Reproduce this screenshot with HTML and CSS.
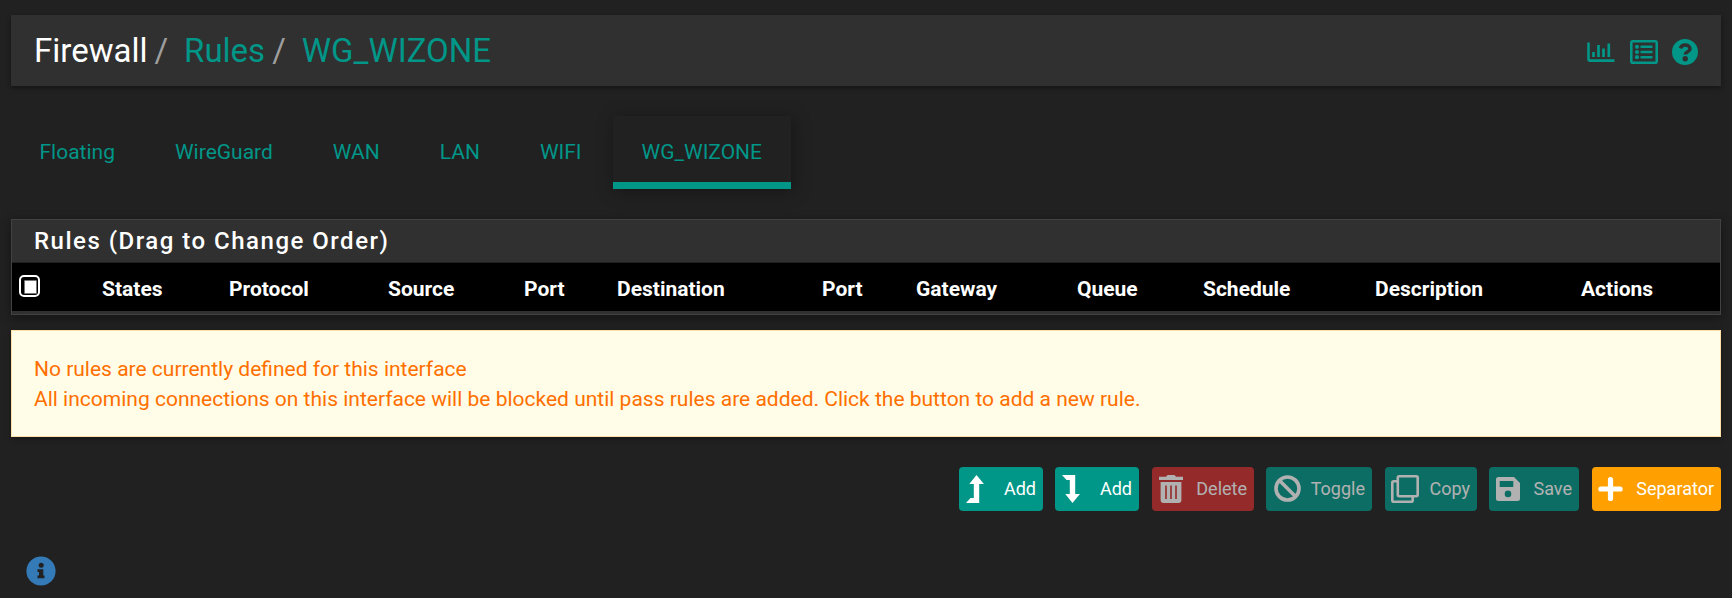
FILE: index.html
```
<!DOCTYPE html>
<html lang="en">
<head>
    <meta charset="UTF-8">
    <meta name="viewport" content="width=device-width, initial-scale=1.0">
    <title>Firewall: Rules: WG_WIZONE</title>
    <link rel="stylesheet" href="styles.css">
</head>
<body>
    <header class="header">
        <ol class="breadcrumb">
            <li>Firewall</li>
            <li><a href="#">Rules</a></li>
            <li><a href="#">WG_WIZONE</a></li>
        </ol>
        <div class="context-links">
            <a href="#" title="Related status">
                <svg width="28" height="20" viewBox="0 0 28 20"><path d="M1.5 0.5V17.5Q1.5 18.6 2.6 18.6H27.5" fill="none" stroke="currentColor" stroke-width="2.6"/><path d="M6.5 10V15M11.5 3V15M16.5 6.5V15M21.8 1.5V15" stroke="currentColor" stroke-width="2.7"/></svg>
            </a>
            <a href="#" title="Related log entries">
                <svg width="28" height="24" viewBox="0 0 28 24"><rect x="1.3" y="1.3" width="25.4" height="21.4" rx="1.5" fill="none" stroke="currentColor" stroke-width="2.6"/><path d="M10.5 6.8H22.5M10.5 12H22.5M10.5 17.2H22.5" stroke="currentColor" stroke-width="2.4"/><circle cx="7" cy="6.8" r="2.1"/><circle cx="7" cy="12" r="2.1"/><circle cx="7" cy="17.2" r="2.1"/></svg>
            </a>
            <a href="#" title="Help">
                <svg width="26" height="26" viewBox="0 0 26 26"><circle cx="13" cy="13" r="13"/><path d="M8.3 9.3C9.3 7 10.8 6 13.1 6C15.9 6 18 7.6 18 9.9C18 13 13.3 12.5 13.3 15.5" fill="none" stroke="#303030" stroke-width="3.6"/><circle cx="13.2" cy="19.7" r="2.7" fill="#303030"/></svg>
            </a>
        </div>
    </header>

    <ul class="nav-tabs">
        <li><a href="#">Floating</a></li>
        <li><a href="#">WireGuard</a></li>
        <li><a href="#">WAN</a></li>
        <li><a href="#">LAN</a></li>
        <li><a href="#">WIFI</a></li>
        <li class="active"><a href="#">WG_WIZONE</a></li>
    </ul>

    <div class="panel">
        <h2 class="panel-heading">Rules (Drag to Change Order)</h2>
        <table class="rules">
            <thead>
                <tr>
                    <th class="col-check"><span class="checkbox"></span></th>
                    <th class="col-states">States</th>
                    <th class="col-protocol">Protocol</th>
                    <th class="col-source">Source</th>
                    <th class="col-sport">Port</th>
                    <th class="col-dest">Destination</th>
                    <th class="col-dport">Port</th>
                    <th class="col-gateway">Gateway</th>
                    <th class="col-queue">Queue</th>
                    <th class="col-schedule">Schedule</th>
                    <th class="col-descr">Description</th>
                    <th>Actions</th>
                </tr>
            </thead>
        </table>
    </div>

    <div class="alert">
        No rules are currently defined for this interface<br>
        All incoming connections on this interface will be blocked until pass rules are added. Click the button to add a new rule.
    </div>

    <nav class="action-buttons">
        <button class="btn btn-success btn-add">
            <svg width="18" height="28" viewBox="0 0 18 28"><path d="M0 28L4.5 23H7.8V9H3.3L10.5 0L17.9 9H13.2V28Z"/></svg>
            Add
        </button>
        <button class="btn btn-success btn-add btn-gap">
            <svg width="18" height="28" viewBox="0 0 18 28"><path d="M0 0H13.2V19H17.9L10.5 28L3.3 19H7.8V5H4.5Z"/></svg>
            Add
        </button>
        <button class="btn btn-danger btn-delete" disabled>
            <svg width="24" height="28" viewBox="0 0 24 28"><path fill-rule="evenodd" d="M0 1.8H7L8.5 0H15.5L17 1.8H24V5H0ZM1.6 7H22.4V25Q22.4 28 19.4 28H4.6Q1.6 28 1.6 25ZM6.2 10.5V24H7.8V10.5ZM11.2 10.5V24H12.8V10.5ZM16.2 10.5V24H17.8V10.5Z"/></svg>
            Delete
        </button>
        <button class="btn btn-success btn-toggle" disabled>
            <svg width="27" height="27" viewBox="0 0 27 27"><circle cx="13.5" cy="13.5" r="11.5" fill="none" stroke="currentColor" stroke-width="3.6"/><path d="M5.5 5.5L21.5 21.5" stroke="currentColor" stroke-width="3.6"/></svg>
            Toggle
        </button>
        <button class="btn btn-success btn-copy" disabled>
            <svg width="28" height="28" viewBox="0 0 28 28"><g fill="none" stroke="currentColor" stroke-width="2.6" stroke-linejoin="round"><rect x="6.8" y="1.3" width="19.9" height="19.9" rx="1.5"/><path d="M6.8 6.3H2.8Q1.3 6.3 1.3 7.8V25.2Q1.3 26.7 2.8 26.7H20.2Q21.7 26.7 21.7 25.2V21.2"/></g></svg>
            Copy
        </button>
        <button class="btn btn-success btn-save" disabled>
            <svg width="24" height="24" viewBox="0 0 24 24"><path fill-rule="evenodd" d="M2.5 0H18L24 6V21.5Q24 24 21.5 24H2.5Q0 24 0 21.5V2.5Q0 0 2.5 0ZM3.7 4V10H17.3V4ZM12 13.6A3.3 3.3 0 1 0 12 20.2A3.3 3.3 0 1 0 12 13.6Z"/></svg>
            Save
        </button>
        <button class="btn btn-warning btn-separator">
            <svg width="25" height="24" viewBox="0 0 25 24"><path d="M12.5 2.6V21.4M2.9 12H22.1" stroke="currentColor" stroke-width="5.2" stroke-linecap="round"/></svg>
            Separator
        </button>
    </nav>

    <div class="infoblock">
        <svg width="30" height="30" viewBox="0 0 30 30"><circle cx="15" cy="15" r="14.6"/><g fill="#212121"><circle cx="15.2" cy="9.3" r="2.5"/><path d="M11.5 13.3H17.3V19.5H18.5V22.3H11.5V19.5H13V16H11.5Z"/></g></svg>
    </div>
</body>
</html>
```
FILE: styles.css
```
* {
    box-sizing: border-box;
}

body {
    margin: 0;
    padding: 15px 11px 0;
    background: #212121;
    color: #fff;
    font-family: Roboto, "Liberation Sans", sans-serif;
    font-size: 21px;
    line-height: 30px;
    overflow: hidden;
}

a {
    color: #009688;
    text-decoration: none;
}

ol, ul {
    margin: 0;
    padding: 0;
    list-style: none;
}

svg {
    display: block;
    flex: none;
    fill: currentColor;
}

.header {
    display: flex;
    align-items: center;
    justify-content: space-between;
    height: 71px;
    padding: 0 23px;
    background: #303030;
    box-shadow: 0 2px 5px rgba(0, 0, 0, 0.4);
}

.breadcrumb {
    display: flex;
    font-size: 33px;
    line-height: 40px;
}

.breadcrumb li + li::before {
    content: "/";
    padding: 0 16px 0 7px;
    color: #9e9e9e;
}

.context-links {
    display: flex;
    align-items: center;
    gap: 14.5px;
    padding-top: 3px;
}

.nav-tabs {
    display: flex;
    gap: 3px;
    height: 73px;
    margin-top: 30px;
}

.nav-tabs a {
    display: block;
    height: 73px;
    padding: 21px 28.5px 0;
}

.nav-tabs .active a {
    border-bottom: 7px solid #009688;
    box-shadow: 2px 2px 16px rgba(0, 0, 0, 0.35);
}

.panel {
    height: 96px;
    margin-top: 30px;
    border: 1px solid #424242;
    background: #303030;
    box-shadow: 0 3px 10px rgba(0, 0, 0, 0.4);
}

.panel-heading {
    height: 43px;
    margin: 0;
    padding: 6px 22px;
    border-bottom: 1px solid #212121;
    font-size: 24px;
    font-weight: 500;
    letter-spacing: 1.5px;
}

.rules {
    width: 100%;
    height: 48px;
    table-layout: fixed;
    border-collapse: collapse;
    background: #000;
}

.rules th {
    padding: 4px 0 0 7px;
    text-align: left;
    font-weight: 700;
}

.rules .col-check {
    padding-top: 0;
    padding-bottom: 2px;
    width: 83px;
}

.col-states { width: 127px; }
.col-protocol { width: 159px; }
.col-source { width: 136px; }
.col-sport { width: 93px; }
.col-dest { width: 205px; }
.col-dport { width: 94px; }
.col-gateway { width: 161px; }
.col-queue { width: 126px; }
.col-schedule { width: 172px; }
.col-descr { width: 206px; }

.checkbox {
    display: block;
    width: 21px;
    height: 22px;
    padding: 3px;
    border: 2px solid #fff;
    border-radius: 5px;
}

.checkbox::before {
    content: "";
    display: block;
    width: 11px;
    height: 12px;
    border: 1px solid #777;
    border-radius: 1px;
    background: #fff;
}

.alert {
    height: 107px;
    margin-top: 15px;
    padding: 23px 22px;
    border: 1px solid #ffe0a6;
    background: #fffde7;
    color: #ff6f00;
    box-shadow: 0 2px 5px rgba(0, 0, 0, 0.3);
}

.action-buttons {
    display: flex;
    justify-content: flex-end;
    gap: 12px;
    margin-top: 30px;
}

.btn {
    display: flex;
    align-items: center;
    justify-content: space-between;
    height: 44px;
    padding: 0 6px 1px;
    border: 1px solid transparent;
    border-radius: 4px;
    color: #fff;
    font: 400 18px Roboto, "Liberation Sans", sans-serif;
    white-space: nowrap;
}

.btn-success { background: #009688; }
.btn-danger { background: #d32f2f; }
.btn-warning { background: #ffa000; }

.btn:disabled {
    opacity: 0.65;
}

.btn-add { width: 84px; }
.btn-gap { margin-right: 1px; }
.btn-delete { width: 102px; }
.btn-toggle { width: 106px; padding-left: 7px; }
.btn-copy { width: 92px; margin-left: 1px; padding-left: 5px; }
.btn-save { width: 90px; }
.btn-separator { width: 129px; margin-left: 1px; padding-left: 5px; }

.infoblock {
    margin: 45px 0 0 15px;
    color: #337ab7;
}
```
